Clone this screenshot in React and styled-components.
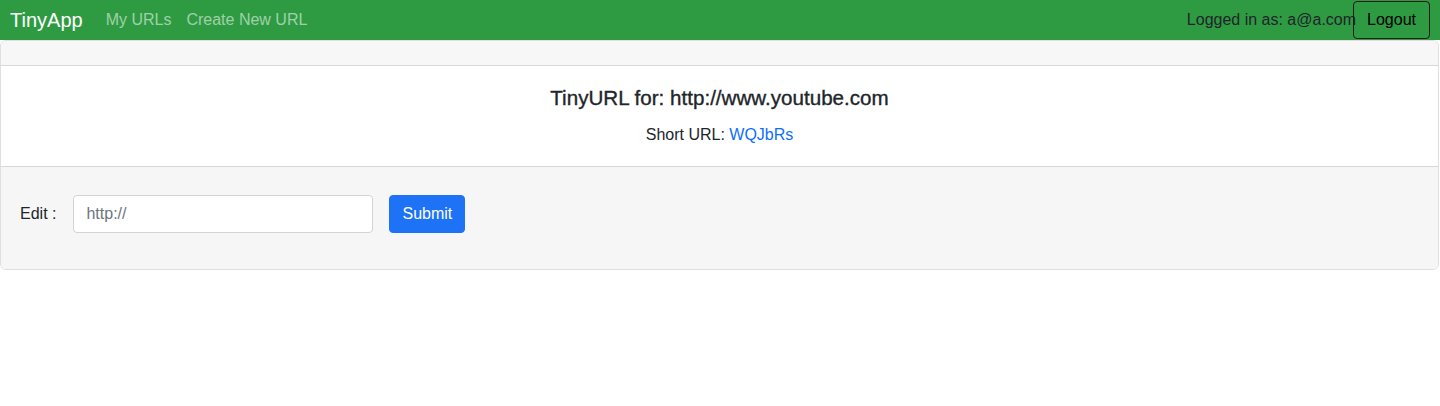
import React from 'react'
import styled, { createGlobalStyle } from 'styled-components'

const GlobalStyle = createGlobalStyle`
  body {
    margin: 0;
    background: #fff;
    font-family: "Liberation Sans", Arial, sans-serif;
    font-size: 16px;
    line-height: 1.5;
    color: #212529;
  }
  * { box-sizing: border-box; }
`

const Navbar = styled.nav`
  height: 40px;
  background: #2e9b43;
  display: flex;
  align-items: center;
  padding: 0 10px;
`

const Brand = styled.a`
  color: #fff;
  font-size: 20px;
  margin-right: 23px;
  text-decoration: none;
`

const NavLink = styled.a`
  color: rgba(255, 255, 255, 0.55);
  font-size: 16px;
  margin-right: 15px;
  text-decoration: none;
`

const NavRight = styled.div`
  margin-left: auto;
  display: flex;
  align-items: center;
`

const UserText = styled.span`
  color: #212529;
  font-size: 16px;
  margin-right: -3px;
`

const OutlineButton = styled.button`
  height: 38px;
  padding: 0 13px;
  font: inherit;
  font-size: 16px;
  color: #000;
  background: transparent;
  border: 1px solid #1a1a1a;
  border-radius: 4px;
`

const Card = styled.div`
  border: 1px solid rgba(0, 0, 0, 0.125);
  border-radius: 6px;
  margin-right: 1px;
  overflow: hidden;
`

const CardHeader = styled.div`
  height: 25px;
  background: #f7f7f7;
  border-bottom: 1px solid rgba(0, 0, 0, 0.125);
`

const CardBody = styled.div`
  padding: 20px 16px 19px;
  text-align: center;
`

const Title = styled.h5`
  margin: 0 0 13px;
  font-size: 20.6px;
  line-height: 24px;
  font-weight: 500;
  -webkit-text-stroke: 0.35px #212529;
`

const Text = styled.p`
  margin: 0;
  font-size: 16px;
  line-height: 24px;
`

const Link = styled.a`
  color: #0d6efd;
  text-decoration: none;
`

const CardFooter = styled.form`
  background: #f6f6f6;
  border-top: 1px solid rgba(0, 0, 0, 0.125);
  padding: 28px 19px 36px;
  display: flex;
  align-items: center;
`

const Label = styled.label`
  font-size: 16px;
  margin-right: 17px;
`

const Input = styled.input`
  width: 300px;
  height: 38px;
  padding: 6px 12px;
  font: inherit;
  font-size: 16px;
  border: 1px solid #ced4da;
  border-radius: 4px;
  margin-right: 16px;
  &::placeholder { color: #6c757d; }
`

const PrimaryButton = styled.button`
  height: 38px;
  padding: 0 12px;
  font: inherit;
  font-size: 16px;
  color: #fff;
  background: #1d72f6;
  border: 1px solid #1d72f6;
  border-radius: 4px;
`

export default function App() {
  return (
    <>
      <GlobalStyle />
      <Navbar>
        <Brand href="#">TinyApp</Brand>
        <NavLink href="#">My URLs</NavLink>
        <NavLink href="#">Create New URL</NavLink>
        <NavRight>
          <UserText>Logged in as: a@a.com</UserText>
          <OutlineButton>Logout</OutlineButton>
        </NavRight>
      </Navbar>
      <Card>
        <CardHeader />
        <CardBody>
          <Title>TinyURL for: http://www.youtube.com</Title>
          <Text>Short URL: <Link href="#">WQJbRs</Link></Text>
        </CardBody>
        <CardFooter onSubmit={e => e.preventDefault()}>
          <Label>Edit :</Label>
          <Input type="text" placeholder="http://" />
          <PrimaryButton type="submit">Submit</PrimaryButton>
        </CardFooter>
      </Card>
    </>
  )
}
